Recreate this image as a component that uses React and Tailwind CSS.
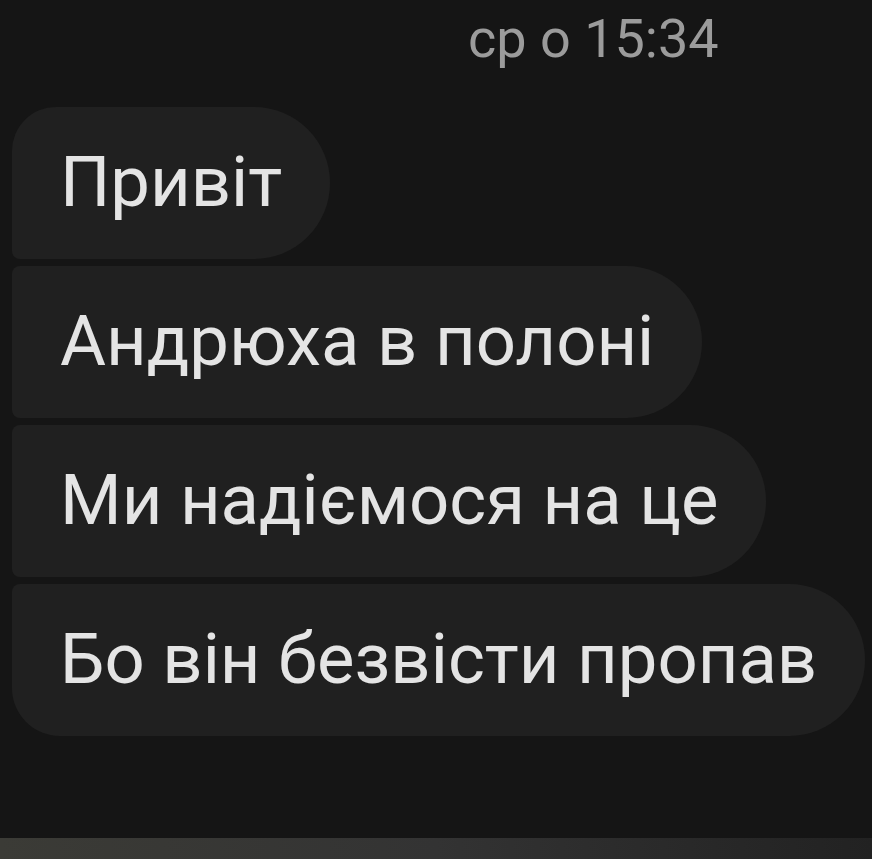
export default function App() {
  const msgs = [
    { text: "Привіт", r: "rounded-tl-[44px] rounded-bl-[8px]" },
    { text: "Андрюха в полоні", r: "rounded-tl-[8px] rounded-bl-[8px]" },
    { text: "Ми надіємося на це", r: "rounded-tl-[8px] rounded-bl-[8px]" },
    { text: "Бо він безвісти пропав", r: "rounded-tl-[8px] rounded-bl-[48px]" },
  ];
  return (
    <div
      className="w-[872px] h-[859px] bg-[#151515] flex flex-col overflow-hidden"
      style={{ fontFamily: "Roboto, 'Liberation Sans', sans-serif" }}
    >
      <div className="h-[107px] pl-[468px] pt-[9px] text-[54px] leading-[60px] text-[#9b9b9b]">
        ср о 15:34
      </div>
      <div className="flex flex-col items-start gap-[7px] pl-[12px]">
        {msgs.map((m, i) => (
          <div
            key={i}
            className={`h-[152px] flex items-center bg-[#202020] rounded-r-[76px] pl-[48px] pr-[48px] text-[70.6px] text-[#e4e4e4] whitespace-nowrap ${m.r}`}
          >
            {m.text}
          </div>
        ))}
      </div>
      <div className="flex-1" />
      <div className="h-[21px] bg-gradient-to-r from-[#3b3b36] via-[#333333] to-[#222222]" />
    </div>
  );
}
